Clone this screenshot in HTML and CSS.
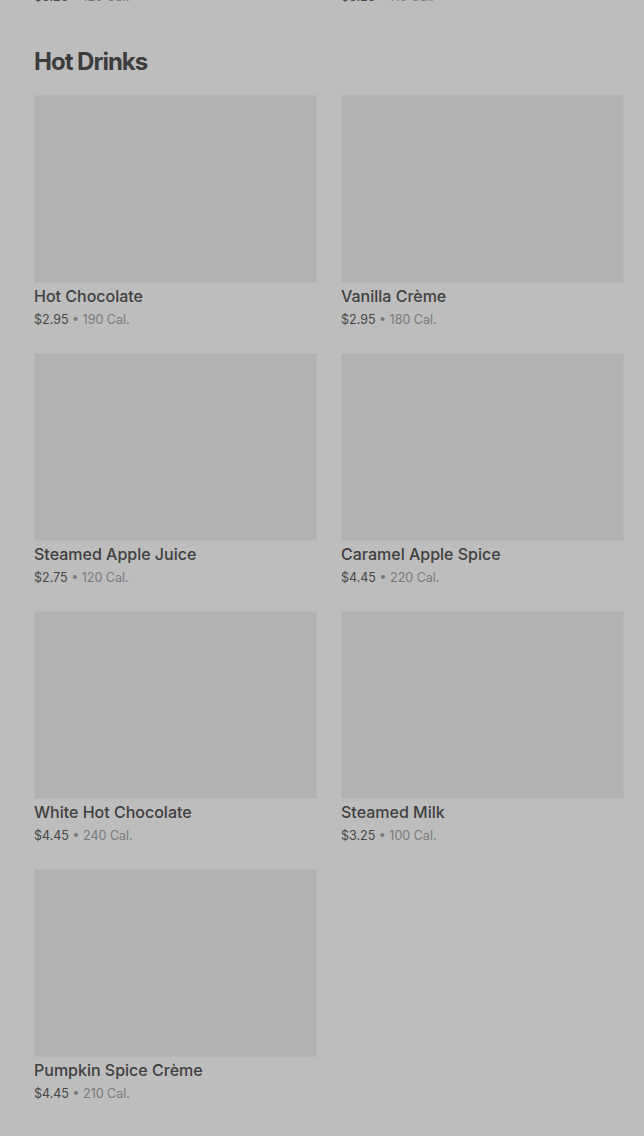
FILE: index.html
```html
<!DOCTYPE html>
<html lang="en">
<head>
    <meta charset="UTF-8">
    <meta name="viewport" content="width=device-width, initial-scale=1.0">
    <title>Menu</title>
    <link rel="stylesheet" href="styles.css">
</head>
<body>
    <div class="page">
        <div class="grid prev">
            <div class="item"><div class="meta"><span class="price">$3.25</span> • 120 Cal.</div></div>
            <div class="item"><div class="meta"><span class="price">$3.25</span> • 110 Cal.</div></div>
        </div>

        <h2 class="section-title">Hot Drinks</h2>
        <div class="grid">
            <div class="item">
                <div class="thumb"></div>
                <div class="name">Hot Chocolate</div>
                <div class="meta"><span class="price">$2.95</span> • 190 Cal.</div>
            </div>
            <div class="item">
                <div class="thumb"></div>
                <div class="name">Vanilla Crème</div>
                <div class="meta"><span class="price">$2.95</span> • 180 Cal.</div>
            </div>
            <div class="item">
                <div class="thumb"></div>
                <div class="name">Steamed Apple Juice</div>
                <div class="meta"><span class="price">$2.75</span> • 120 Cal.</div>
            </div>
            <div class="item">
                <div class="thumb"></div>
                <div class="name">Caramel Apple Spice</div>
                <div class="meta"><span class="price">$4.45</span> • 220 Cal.</div>
            </div>
            <div class="item">
                <div class="thumb"></div>
                <div class="name">White Hot Chocolate</div>
                <div class="meta"><span class="price">$4.45</span> • 240 Cal.</div>
            </div>
            <div class="item">
                <div class="thumb"></div>
                <div class="name">Steamed Milk</div>
                <div class="meta"><span class="price">$3.25</span> • 100 Cal.</div>
            </div>
            <div class="item">
                <div class="thumb"></div>
                <div class="name">Pumpkin Spice Crème</div>
                <div class="meta"><span class="price">$4.45</span> • 210 Cal.</div>
            </div>
        </div>
    </div>
</body>
</html>
```

FILE: styles.css
```css
html, body {
    margin: 0;
    background-color: #bdbdbd;
}
body {
    font-family: Inter, "Noto Sans", sans-serif;
    color: #3e3e3e;
    overflow: hidden;
}
.page {
    padding: 0 20px 0 34px;
}
.grid {
    display: grid;
    grid-template-columns: 283px 283px;
    column-gap: 24px;
    row-gap: 24px;
}
.prev {
    margin-top: -17px;
}
.section-title {
    margin: 41px 0 18px;
    font-size: 24px;
    line-height: 30px;
    font-weight: 700;
    letter-spacing: -1px;
    color: #3c3c3c;
}
.thumb {
    height: 188px;
    background-color: #b1b1b1;
    box-shadow: inset 0 0 0 1px #b6b6b6;
}
.name {
    margin-top: 3px;
    font-size: 16px;
    line-height: 20px;
    font-weight: 500;
    color: #404040;
}
.meta {
    margin-top: 5px;
    font-size: 12.5px;
    line-height: 18px;
    color: #7a7a7a;
}
.price {
    color: #484848;
}
```
